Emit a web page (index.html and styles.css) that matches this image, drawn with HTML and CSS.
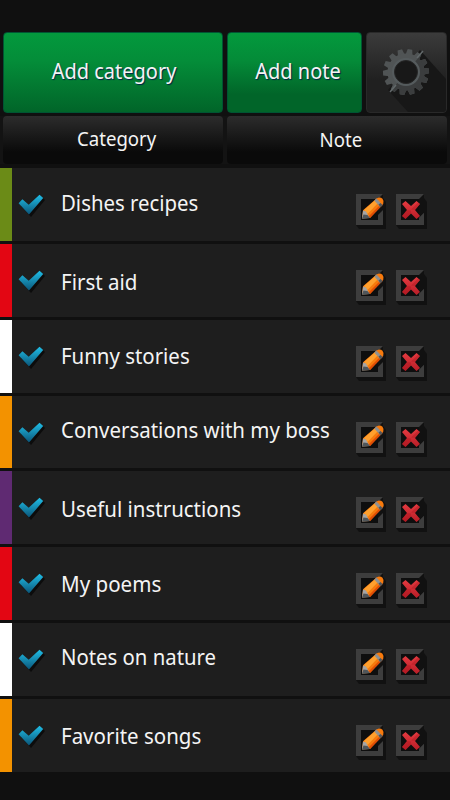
FILE: index.html
```
<!DOCTYPE html>
<html lang="en">
<head>
<meta charset="utf-8">
<title>Notes</title>
<link rel="stylesheet" href="styles.css">
</head>
<body>
<svg class="defs" width="0" height="0" aria-hidden="true">
  <defs>
    <linearGradient id="blue" x1="0" y1="0" x2="0" y2="1"><stop offset="0" stop-color="#20bfe8"/><stop offset="1" stop-color="#0b5578"/></linearGradient>
    <linearGradient id="red" x1="0" y1="0" x2="0" y2="1"><stop offset="0" stop-color="#e43a40"/><stop offset="1" stop-color="#b81d27"/></linearGradient>
    <symbol id="check" viewBox="0 0 28 24">
      <path d="M3 12l3-3 6 6L24 3l3 3-14 17z" fill="#0c0c0c"/>
      <path d="M.6 9.300L4.400 5.300l6.300 5.500L21.500.7l3.700 3.400L11 20.500z" fill="url(#blue)"/>
    </symbol>
    <symbol id="edit" viewBox="0 0 32 36">
      <path d="M0 31l3 4h27V8l-3-4H7z" fill="#111"/>
      <path d="M0 0h27v31H0z" fill="#3d3d3d"/>
      <path d="M5 5h17v21H5z" fill="#0e0e0e"/>
      <path d="M22 5l5-5v16l-5 5z" fill="#111"/>
      <path d="M6 24.300l1-8L20.500 4.500q3.500-2 6 .2q2 2.800 .7 5.300L14 24z" fill="#f77a0d"/>
      <path d="M8 16L20 5.500l3 2.500L11.500 20z" fill="#ffa02e"/>
      <path d="M12.500 22.500L25 10l2 .5L14 24z" fill="#e04d05"/>
      <path d="M18.300 6.500l2.200-2 6 6.500-2.200 2.300z" fill="#8f9090"/>
      <path d="M22.500 10.500l2-1.500 2 2-2.200 2.300z" fill="#555"/>
      <path d="M6 24.500l1-8 3 1 3.500 6.500z" fill="#a5a5a5"/>
      <path d="M6 24.500l1.500-4 4 .5 2.500 3z" fill="#50565a"/>
    </symbol>
    <symbol id="delete" viewBox="0 0 32 36">
      <path d="M0 31l3 4h28V8l-3-4H7z" fill="#111"/>
      <path d="M0 0h28v31H0z" fill="#3d3d3d"/>
      <path d="M5 5h18v21H5z" fill="#0e0e0e"/>
      <path d="M23 5l5-5v19l-5 5z" fill="#111"/>
      <path d="M28 19v12h-5v-7z" fill="#3d3d3d"/>
      <path d="M6 10l3.500-3 5.500 5 5.500-5L24 10l-5 6 5 6-3.500 3-5.500-5.500L9.500 25 6 22l5-6z" fill="url(#red)"/>
      <path d="M11 16L6 22l3.500 3 5.500-5.500v-3zM19 16l5-6-2-1.500-7 7z" fill="#a9131e" opacity=".35"/>
    </symbol>
    <clipPath id="shade"><path d="M58 19L23 61l10 19h48V10z"/></clipPath>
  </defs>
</svg>
<header class="toolbar">
  <button class="btn wide"><span>Add category</span></button>
  <button class="btn note"><span>Add note</span></button>
  <button class="btn gear" aria-label="Settings">
    <svg viewBox="0 0 81 80" width="81" height="80">
      <path d="M54 18l27 30v32H42L22 58z" fill="#171717"/>
      <g id="teeth"></g>
    </svg>
  </button>
</header>
<nav class="tabs">
  <div class="tab cat"><span>Category</span></div>
  <div class="tab nt"><span>Note</span></div>
</nav>
<main class="list" id="list"></main>
<script src="app.js"></script>
</body>
</html>
```
FILE: styles.css
```
body { margin: 0; width: 450px; height: 800px; overflow: hidden; background: #101010; color: #f4f4f4; font-family: "Noto Sans", sans-serif; }
.defs { position: absolute; }
.toolbar { display: flex; gap: 4px; padding: 32px 3px 3px; height: 81px; }
.btn { box-sizing: border-box; display: flex; justify-content: center; margin: 0; padding: 22px 0 0; border: 1px solid #053; border-radius: 4px; background: linear-gradient(#03993d, #048b38 35%, #016529 78%); color: #f4f4f4; font: 21.500px/31px "Noto Sans", sans-serif; text-shadow: 1px 1px 1px #024; }
.wide { width: 220px; padding-left: 2px; background: linear-gradient(#03993d, #048d39 35%, #016529); }
.note { width: 135px; padding-left: 6px; }
.gear { width: 81px; padding: 0; border-color: #292929; background: linear-gradient(#3b3b3b, #202020 60%); overflow: hidden; }
.gear svg { flex: none; margin: -1px; }
.btn span, .tab span, .label { display: block; white-space: nowrap; transform: scaleX(.93); }
.tabs { display: grid; grid-template-columns: 220px 1fr; gap: 4px; padding: 0 3px; height: 48px; margin-bottom: 4px; background: #131313; }
.tab { display: flex; justify-content: center; border-radius: 4px; background: linear-gradient(#2c2c2c, #0a0a0a 75%); font-size: 20px; line-height: 28px; }
.cat { padding: 9px 0 0 7px; }
.nt { padding: 10px 0 0 7px; }
.list { display: grid; grid-template-rows: repeat(8, 72.900px); row-gap: 2.960px; }
.row { display: flex; align-items: flex-start; background: #1e1e1e; }
.swatch { width: 11.500px; height: 100%; margin-right: 6px; }
.check { width: 28px; height: 24px; margin-top: 26px; }
.label { width: 290px; margin: 18px 5px 0 15.500px; font-size: 22px; line-height: 32px; transform-origin: left; }
.action { width: 32px; height: 36px; margin: 26px 8px 0 0; }
```
FILE: app.js
```
const rows = [
  ["Dishes recipes", "#6b8b17", 0.926, 18],
  ["First aid", "#e30613", 0.933, 20.8],
  ["Funny stories", "#fff", 0.928, 19.3],
  ["Conversations with my boss", "#f39200", 0.931, 17.8],
  ["Useful instructions", "#5f2a72", 0.93, 20.5],
  ["My poems", "#e30613", 0.935, 19.7],
  ["Notes on nature", "#fff", 0.924, 16.8],
  ["Favorite songs", "#f39200", 0.931, 19.6]
];
document.getElementById("list").innerHTML = rows.map(([name, color, scale, top]) => `
  <div class="row">
    <div class="swatch" style="background:${color}"></div>
    <svg class="check"><use href="#check"/></svg>
    <div class="label" style="margin-top:${top}px;transform:scaleX(${scale})">${name}</div>
    <svg class="action"><use href="#edit"/></svg>
    <svg class="action"><use href="#delete"/></svg>
  </div>`).join("");

const gear = (color) => {
  let teeth = "";
  for (let i = 0; i < 14; i++) {
    teeth += `<path d="M37.700 17h4.600l1.200 6h-7z" fill="${color}" transform="rotate(${i * 360 / 14 + 10} 40 40)"/>`;
  }
  return teeth + `<circle cx="40" cy="40" r="15.500" fill="none" stroke="${color}" stroke-width="6"/>`;
};
document.getElementById("teeth").innerHTML =
  gear("#505455") +
  `<g clip-path="url(#shade)">${gear("#3b3d3e")}</g>` +
  '<path d="M51 26l6-7M24 60l6-7" stroke="#62686a" stroke-width="1.500"/>' +
  '<circle cx="40" cy="40" r="12.500" fill="#181818" stroke="#555b5d" stroke-width="3"/>' +
  '<circle cx="40" cy="40" r="11.500" fill="#181818" stroke="#262626"/>';
```
